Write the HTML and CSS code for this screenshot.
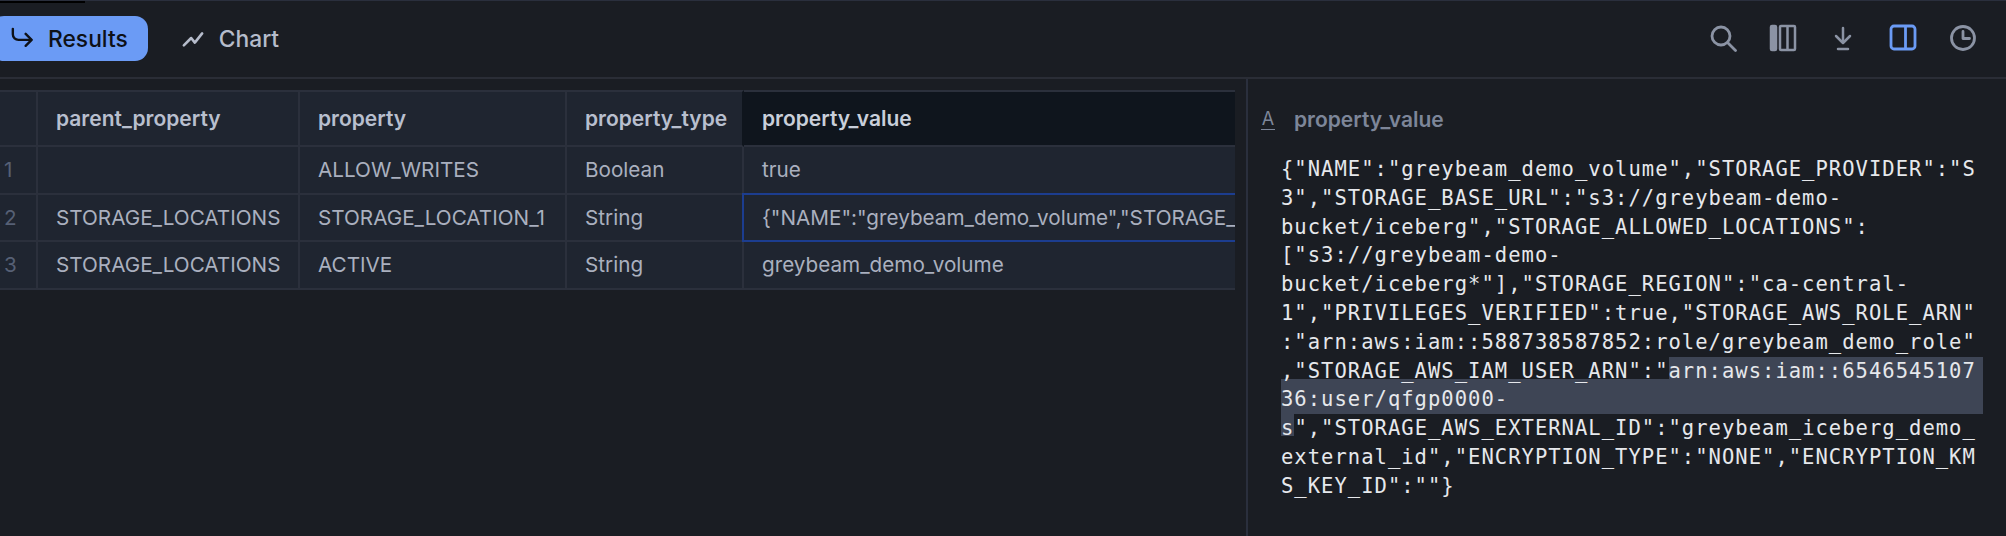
FILE: index.html
```html
<!DOCTYPE html>
<html lang="en">
<head>
  <meta charset="UTF-8">
  <meta name="viewport" content="width=device-width, initial-scale=1.0">
  <title>Results</title>
  <link rel="stylesheet" href="styles.css">
</head>
<body>
  <div class="top-strip"></div>

  <!-- Toolbar -->
  <header class="toolbar">
    <div class="tabs">
      <button class="tab tab-active" type="button">
        <svg class="tab-icon" viewBox="0 0 24 24" fill="none" stroke="currentColor" stroke-width="2.6" stroke-linecap="round" stroke-linejoin="round"><path d="M2 2v6c0 4 3 6 6 6h14"/><path d="M16 7.500l6.500 6.500-6.500 6.500"/></svg>
        Results
      </button>
      <button class="tab" type="button">
        <svg class="tab-icon" viewBox="0 0 24 24" fill="none" stroke="currentColor" stroke-width="2.8" stroke-linecap="round" stroke-linejoin="round"><path d="M2 20l8-8 4 5 8-10"/></svg>
        Chart
      </button>
    </div>
    <div class="tools">
      <svg class="tool" viewBox="0 0 28 28" fill="none" stroke="currentColor" stroke-width="2.800" stroke-linecap="round"><circle cx="12" cy="12" r="9"/><path d="M19 19l7.500 7.500"/></svg>
      <svg class="tool" viewBox="0 0 28 28" fill="none" stroke="currentColor" stroke-width="2.500"><rect x="2" y="2" width="5" height="24" rx="1" fill="currentColor"/><rect x="11" y="2" width="15" height="24" rx="1"/><path d="M18.500 2v24"/></svg>
      <svg class="tool" viewBox="0 0 28 28" fill="none" stroke="currentColor" stroke-width="2.500" stroke-linecap="round" stroke-linejoin="round"><path d="M14 4v14"/><path d="M7 12l7 7 7-7"/><path d="M9 25h10"/></svg>
      <svg class="tool tool-active" viewBox="0 0 28 28" fill="none" stroke="currentColor" stroke-width="2.800"><rect x="2" y="2" width="24" height="23" rx="3"/><path d="M16.500 2v23"/></svg>
      <svg class="tool" viewBox="0 0 28 28" fill="none" stroke="currentColor" stroke-width="2.800" stroke-linecap="round" stroke-linejoin="round"><circle cx="14" cy="14" r="11.500"/><path d="M14 7.500v7h6.500"/></svg>
    </div>
  </header>

  <main class="content">
    <!-- Results table -->
    <section class="grid-wrap">
      <table class="grid">
        <colgroup>
          <col class="col-index">
          <col class="col-parent">
          <col class="col-property">
          <col class="col-type">
          <col>
        </colgroup>
        <thead>
          <tr>
            <th></th>
            <th>parent_property</th>
            <th>property</th>
            <th>property_type</th>
            <th class="th-selected">property_value</th>
          </tr>
        </thead>
        <tbody>
          <tr>
            <td class="index">1</td>
            <td></td>
            <td>ALLOW_WRITES</td>
            <td>Boolean</td>
            <td>true</td>
          </tr>
          <tr>
            <td class="index">2</td>
            <td>STORAGE_LOCATIONS</td>
            <td>STORAGE_LOCATION_1</td>
            <td>String</td>
            <td class="td-selected">{"NAME":"greybeam_demo_volume","STORAGE_</td>
          </tr>
          <tr>
            <td class="index">3</td>
            <td>STORAGE_LOCATIONS</td>
            <td>ACTIVE</td>
            <td>String</td>
            <td>greybeam_demo_volume</td>
          </tr>
        </tbody>
      </table>
    </section>

    <!-- Cell detail -->
    <aside class="detail">
      <div class="detail-title">
        <span class="type-badge">A</span>
        <span>property_value</span>
      </div>
      <div class="value">
        <div class="line">{"NAME":"greybeam_demo_volume","STORAGE_PROVIDER":"S</div>
        <div class="line">3","STORAGE_BASE_URL":"s3://greybeam-demo-</div>
        <div class="line">bucket/iceberg","STORAGE_ALLOWED_LOCATIONS":</div>
        <div class="line">["s3://greybeam-demo-</div>
        <div class="line">bucket/iceberg*"],"STORAGE_REGION":"ca-central-</div>
        <div class="line">1","PRIVILEGES_VERIFIED":true,"STORAGE_AWS_ROLE_ARN"</div>
        <div class="line">:"arn:aws:iam::588738587852:role/greybeam_demo_role"</div>
        <div class="line line-split">,"STORAGE_AWS_IAM_USER_ARN":"<span class="sel sel-rest">arn:aws:iam::6546545107</span></div>
        <div class="line line-sel">36:user/qfgp0000-</div>
        <div class="line"><span class="sel-end">s</span>","STORAGE_AWS_EXTERNAL_ID":"greybeam_iceberg_demo_</div>
        <div class="line">external_id","ENCRYPTION_TYPE":"NONE","ENCRYPTION_KM</div>
        <div class="line">S_KEY_ID":""}</div>
      </div>
    </aside>
  </main>
</body>
</html>
```

FILE: styles.css
```css
/* General */
html, body {
  height: 100%;
}
body {
  margin: 0;
  overflow: hidden;
  background-color: #1a1d23;
  color: #aab0bf;
  font-family: Inter, "Liberation Sans", sans-serif;
  border-top: 1px solid #2a2f3d;
  box-sizing: border-box;
  position: relative;
}
.top-strip {
  position: absolute;
  left: 0;
  top: 0;
  width: 85px;
  height: 2px;
  background-color: #000000;
}

/* Toolbar */
.toolbar {
  height: 78px;
  box-sizing: border-box;
  display: flex;
  align-items: center;
  justify-content: space-between;
  border-bottom: 2px solid #2a2d36;
  padding-bottom: 2px;
}
.tabs {
  display: flex;
  align-items: center;
  gap: 14px;
  margin-left: -9px;
}
.tab {
  display: flex;
  align-items: center;
  gap: 15px;
  height: 45px;
  padding: 0 20px;
  border: none;
  border-radius: 13px;
  background: none;
  color: #b6bccb;
  font-family: inherit;
  font-size: 22.8px;
  font-weight: 500;
}
.tab-active {
  background-color: #6b9bf5;
  color: #0e1117;
}
.tab-icon {
  width: 22px;
  height: 22px;
}
.tools {
  display: flex;
  align-items: center;
  gap: 32px;
  padding-right: 29px;
  color: #8b93a4;
}
.tool {
  width: 28px;
  height: 28px;
}
.tool-active {
  color: #6b9bf5;
}

/* Layout */
.content {
  display: flex;
  height: 457px;
}
.grid-wrap {
  width: 1248px;
  padding-top: 11px;
  box-sizing: border-box;
  border-right: 2px solid #2a2f3d;
  flex-shrink: 0;
}

/* Table */
.grid {
  width: 1235px;
  table-layout: fixed;
  border-collapse: separate;
  border-spacing: 0;
  font-size: 20.7px;
}
.col-index {
  width: 38px;
}
.col-parent {
  width: 262px;
}
.col-property {
  width: 267px;
}
.col-type {
  width: 177px;
}
.grid th,
.grid td {
  box-sizing: border-box;
  border-right: 2px solid #2b303c;
  border-bottom: 2px solid #2b303c;
  background-color: #1f2530;
  padding: 0 18px;
  text-align: left;
  white-space: nowrap;
  overflow: hidden;
}
.grid th {
  height: 57px;
  border-top: 2px solid #2b303c;
  font-size: 21px;
  font-weight: 600;
  color: #b8bfce;
}
.grid td {
  height: 47.5px;
  font-weight: 400;
}
.grid tr > :last-child {
  border-right: none;
}
.grid .index {
  padding: 0 0 0 4px;
  color: #566075;
}
.grid th:nth-child(4) {
  border-right-color: #0f151d;
}
.grid .th-selected {
  background-color: #0f151d;
  color: #c9cfda;
}
.grid .td-selected {
  border-bottom-color: #1c3d8f;
  box-shadow: 0 -2px 0 #1c3d8f, -2px 0 0 #1c3d8f, -2px -2px 0 #1c3d8f;
}

/* Cell detail */
.detail {
  flex: 1;
  min-width: 0;
}
.detail-title {
  display: flex;
  align-items: center;
  gap: 19px;
  height: 26px;
  margin: 27px 0 0 13px;
  color: #7d8699;
  font-size: 21px;
  font-weight: 600;
}
.type-badge {
  width: 14px;
  font-size: 18px;
  font-weight: 400;
  line-height: 20px;
  border-bottom: 1px solid #7d8699;
  text-align: center;
}
.value {
  margin: 23px 23px 0 33px;
  color: #e6e8ec;
  font-family: "DejaVu Sans Mono", "Liberation Mono", monospace;
  font-size: 20.5px;
  letter-spacing: 1.02px;
}
.line {
  height: 28.8px;
  line-height: 28.8px;
  white-space: nowrap;
}
.line-split {
  display: flex;
}
.sel {
  background-color: #3e4555;
}
.sel-rest {
  flex: 1;
}
.line-sel {
  margin-top: -6px;
  height: 34.8px;
  padding-top: 6px;
  box-sizing: border-box;
  background-color: #3e4555;
}
.sel-end {
  background: linear-gradient(#3e4555 22px, transparent 22px);
  display: inline-block;
}
```
